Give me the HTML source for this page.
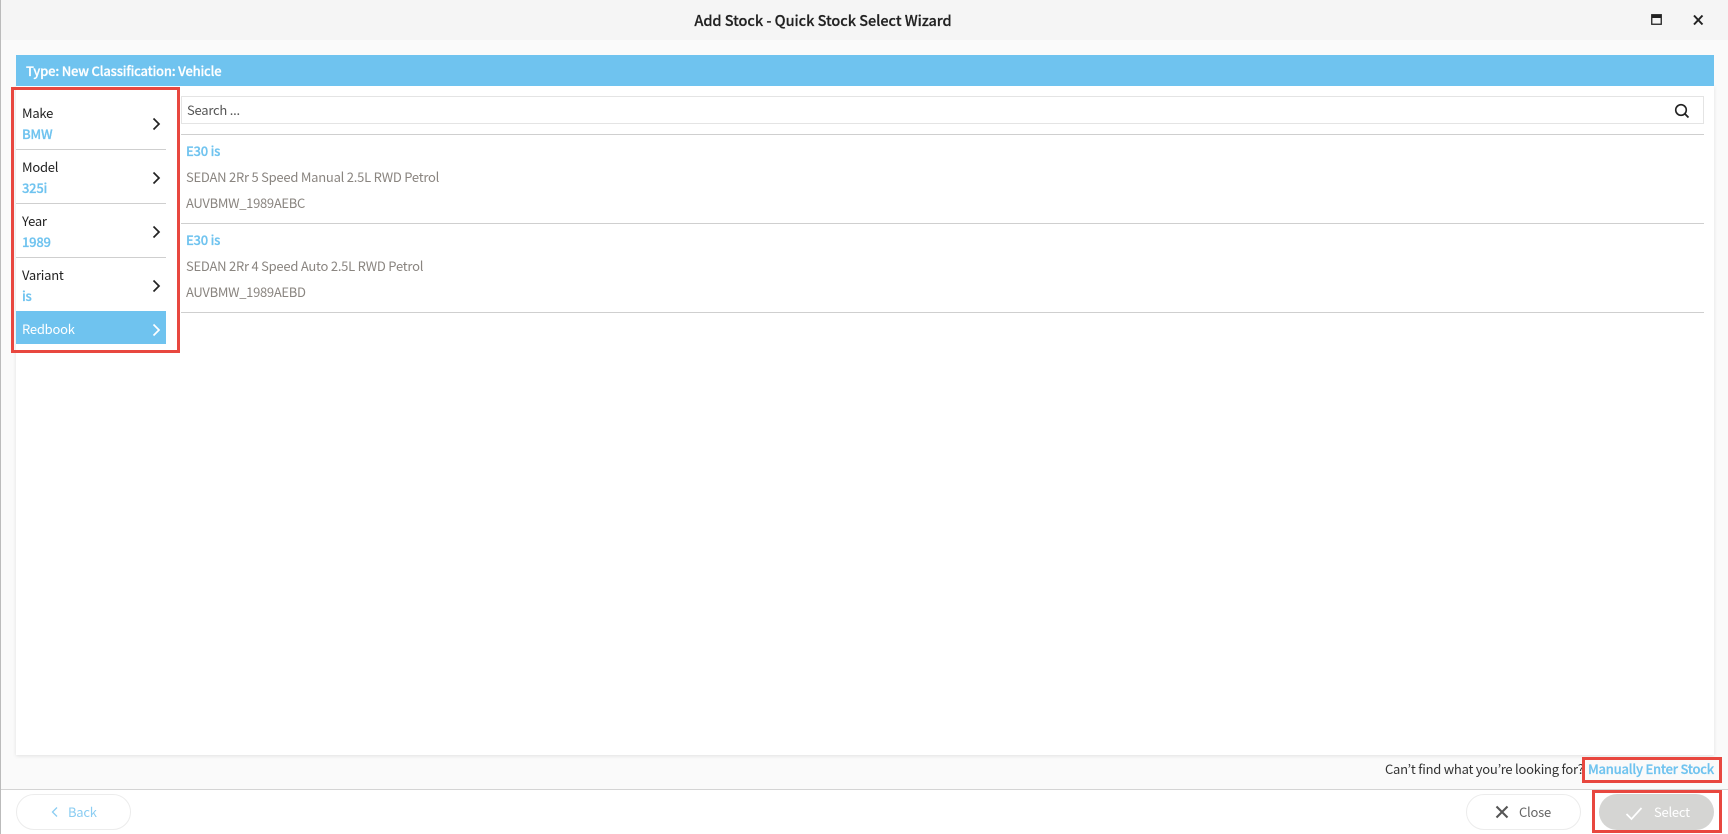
<!DOCTYPE html>
<html><head><meta charset="utf-8"><style>
html,body{margin:0;padding:0;width:1728px;height:834px;overflow:hidden;background:#fafafa}
body{position:relative;font-family:"Noto Sans CJK JP","Liberation Sans",sans-serif;font-size:13px;letter-spacing:-.24px;color:#222}
div,span,svg{position:absolute;box-sizing:border-box}
.t{white-space:nowrap;line-height:20px;height:20px}
.b{color:#6fc3ef;font-weight:500;-webkit-text-stroke:.25px #6fc3ef}
.g{color:#8a8580}
.sep{left:16px;width:150px;height:1px;background:#cfcfcf}
.ln{left:181px;width:1523px;height:1px;background:#cfcfcf}
.red{border:3px solid #e8473f}
.btn{top:794px;height:36px;width:115px;border-radius:18px;border:1px solid #ececec;background:#fff}
</style></head><body>
<div style="left:0;top:0;width:1728px;height:40px;background:#f5f5f5"></div>
<div class="t" style="left:0;top:11px;width:1646px;text-align:center;font-size:14.500px;letter-spacing:-.05px;font-weight:500;color:#222;-webkit-text-stroke:.2px #222">Add Stock - Quick Stock Select Wizard</div>
<svg style="left:1651px;top:14px" width="12" height="12" viewBox="0 0 12 12"><rect x=".75" y=".75" width="9.5" height="9.5" fill="none" stroke="#222" stroke-width="1.3"/><rect x="1" y="1" width="9" height="3" fill="#222"/></svg>
<svg style="left:1692px;top:14px" width="12" height="12" viewBox="0 0 12 12"><path d="M2 1.5 10.500 10.500M10.500 1.500 2 10.500" stroke="#222" stroke-width="2" fill="none"/></svg>

<div style="left:16px;top:86px;width:1698px;height:669px;background:#fff;box-shadow:0 1px 4px rgba(0,0,0,.1)"></div>
<div style="left:16px;top:55px;width:1698px;height:31px;background:#6fc3ef"></div>
<div class="t" style="left:26px;top:61px;color:#fff;font-weight:500;font-size:13px;letter-spacing:-.2px;-webkit-text-stroke:.25px #fff">Type: New Classification: Vehicle</div>

<div class="t" style="left:22px;top:103px">Make</div><div class="t b" style="left:22px;top:124px">BMW</div>
<div class="sep" style="top:149px"></div>
<div class="t" style="left:22px;top:157px">Model</div><div class="t b" style="left:22px;top:178px">325i</div>
<div class="sep" style="top:203px"></div>
<div class="t" style="left:22px;top:211px">Year</div><div class="t b" style="left:22px;top:232px">1989</div>
<div class="sep" style="top:257px"></div>
<div class="t" style="left:22px;top:265px">Variant</div><div class="t b" style="left:22px;top:286px">is</div>
<div style="left:16px;top:311px;width:150px;height:33px;background:#6fc3ef"></div>
<div class="t" style="left:22px;top:319px;color:#fff">Redbook</div>
<svg style="left:150px;top:117px" width="12" height="14" viewBox="0 0 12 14"><path d="M3.500 1.500 9 7 3.500 12.500" stroke="#222" stroke-width="1.700" fill="none"/></svg>
<svg style="left:150px;top:171px" width="12" height="14" viewBox="0 0 12 14"><path d="M3.500 1.500 9 7 3.500 12.500" stroke="#222" stroke-width="1.700" fill="none"/></svg>
<svg style="left:150px;top:225px" width="12" height="14" viewBox="0 0 12 14"><path d="M3.500 1.500 9 7 3.500 12.500" stroke="#222" stroke-width="1.700" fill="none"/></svg>
<svg style="left:150px;top:279px" width="12" height="14" viewBox="0 0 12 14"><path d="M3.500 1.500 9 7 3.500 12.500" stroke="#222" stroke-width="1.700" fill="none"/></svg>
<svg style="left:150px;top:323px" width="12" height="14" viewBox="0 0 12 14"><path d="M3.500 1.500 9 7 3.500 12.500" stroke="#fff" stroke-width="1.700" fill="none"/></svg>

<div style="left:181px;top:96px;width:1523px;height:28px;border:1px solid #e4e4e4"></div>
<div class="t" style="left:187px;top:100px;color:#555">Search ...</div>
<svg style="left:1674px;top:103px" width="16" height="16" viewBox="0 0 16 16"><circle cx="7" cy="7" r="5.300" fill="none" stroke="#222" stroke-width="1.600"/><path d="M10.800 10.800 14.500 14.500" stroke="#222" stroke-width="1.800"/></svg>

<div class="ln" style="top:134px"></div>
<div class="t b" style="left:186px;top:141px">E30 is</div>
<div class="t g" style="left:186px;top:167px">SEDAN 2Rr 5 Speed Manual 2.5L RWD Petrol</div>
<div class="t g" style="left:186px;top:193px;letter-spacing:-.3px">AUVBMW_1989AEBC</div>
<div class="ln" style="top:223px"></div>
<div class="t b" style="left:186px;top:230px">E30 is</div>
<div class="t g" style="left:186px;top:256px">SEDAN 2Rr 4 Speed Auto 2.5L RWD Petrol</div>
<div class="t g" style="left:186px;top:282px;letter-spacing:-.3px">AUVBMW_1989AEBD</div>
<div class="ln" style="top:312px"></div>

<div class="t" style="left:1385px;top:759px;color:#333">Can’t find what you’re looking for?</div>
<div class="t" style="left:1588px;top:759px;color:#6fc3ef;font-weight:500;-webkit-text-stroke:.25px #6fc3ef">Manually Enter Stock</div>

<div style="left:0;top:789px;width:1728px;height:45px;background:#fff;border-top:1px solid #d4d4d4"></div>
<div class="btn" style="left:16px"></div>
<svg style="left:50px;top:806px" width="10" height="12" viewBox="0 0 10 12"><path d="M7 1.500 2.500 6 7 10.500" stroke="#8bcdf2" stroke-width="1.300" fill="none"/></svg>
<div class="t" style="left:68px;top:802px;color:#8bcdf2">Back</div>
<div class="btn" style="left:1466px"></div>
<svg style="left:1495px;top:805px" width="14" height="14" viewBox="0 0 14 14"><path d="M1.500 1.500 12.500 12.500M12.500 1.500 1.500 12.500" stroke="#555" stroke-width="2.100" fill="none"/></svg>
<div class="t" style="left:1519px;top:802px;color:#666">Close</div>
<div class="btn" style="left:1599px;background:#d5d5d3;border:none"></div>
<svg style="left:1625px;top:805px" width="18" height="16" viewBox="0 0 18 16"><path d="M1.500 9 6.500 14 16.500 3" stroke="#fff" stroke-width="1.700" fill="none"/></svg>
<div class="t" style="left:1654px;top:802px;color:#fff">Select</div>

<div class="red" style="left:11px;top:87px;width:169px;height:266px"></div>
<div class="red" style="left:1582px;top:757px;width:140px;height:26px"></div>
<div class="red" style="left:1592px;top:790px;width:130px;height:43px"></div>
<div style="left:0;top:0;width:1px;height:834px;background:#bbb"></div>
</body></html>
